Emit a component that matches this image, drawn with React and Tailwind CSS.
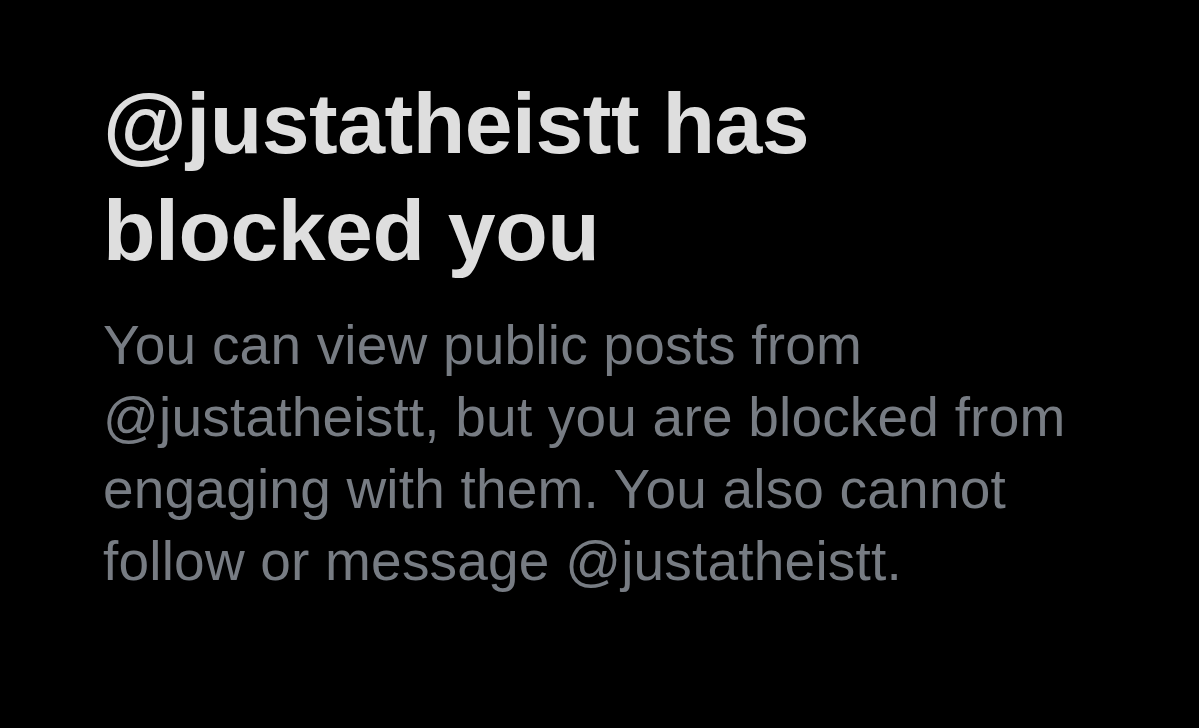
import React from 'react';

const App = () => {
  return (
    <div className="min-h-screen w-full bg-black pl-[103px] pt-[70px]" style={{ fontFamily: '"Liberation Sans", Arial, sans-serif' }}>
      <h1 className="text-[86px] font-bold leading-[107px] text-[#dedede] tracking-[-0.5px]">
        <span className="block whitespace-nowrap">@justatheistt has</span>
        <span className="block whitespace-nowrap">blocked you</span>
      </h1>
      <p className="mt-[25px] text-[55px] leading-[72px] text-[#777c83] tracking-[0.2px]">
        <span className="block whitespace-nowrap">You can view public posts from</span>
        <span className="block whitespace-nowrap">@justatheistt, but you are blocked from</span>
        <span className="block whitespace-nowrap">engaging with them. You also cannot</span>
        <span className="block whitespace-nowrap">follow or message @justatheistt.</span>
      </p>
    </div>
  );
};

export default App;
